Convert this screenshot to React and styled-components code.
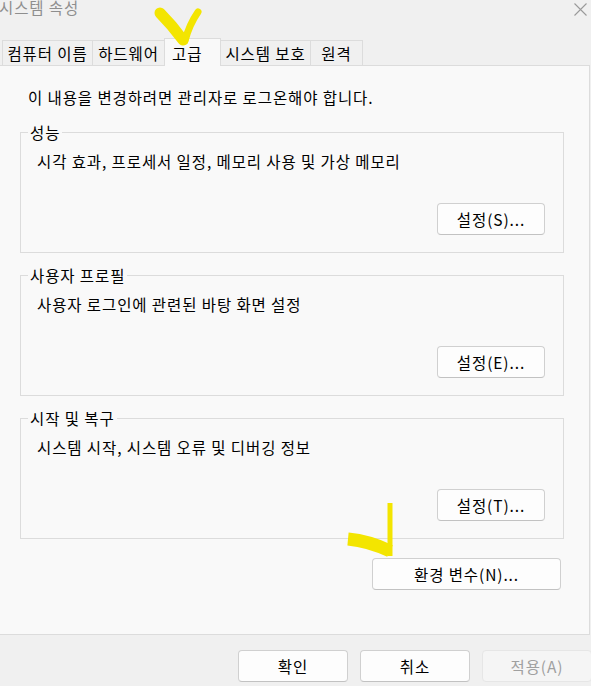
import styled, { createGlobalStyle } from "styled-components";

const GlobalStyle = createGlobalStyle`
  html, body {
    margin: 0;
    padding: 0;
    background: #f0f0f0;
  }
  * {
    box-sizing: border-box;
  }
`;

const Window = styled.div`
  position: relative;
  width: 591px;
  height: 686px;
  overflow: hidden;
  background: #f0f0f0;
  font-family: "Noto Sans CJK KR", "Noto Sans", "Liberation Sans", sans-serif;
  font-size: 15.5px;
  letter-spacing: 0.9px;
  color: #000;
`;

const TitleBar = styled.div`
  display: flex;
  justify-content: space-between;
  align-items: flex-start;
  height: 38px;
`;

const Title = styled.div`
  margin: -1px 0 0 -1px;
  line-height: 16px;
  color: #8e8e8e;
`;

const CloseButton = styled.div`
  display: flex;
  margin: 3px 4px 0 0;
`;

const TabStrip = styled.div`
  display: flex;
  align-items: flex-end;
  height: 28px;
  padding-left: 2px;
  margin-bottom: -1px;
  position: relative;
  z-index: 1;
`;

const Tab = styled.div`
  display: flex;
  align-items: center;
  justify-content: ${(p) => (p.$active ? "flex-start" : "center")};
  width: ${(p) => p.$w}px;
  height: ${(p) => (p.$active ? 28 : 26)}px;
  margin-left: -1px;
  padding: ${(p) => (p.$active ? "1px 0 0 7px" : "0")};
  border: 1px solid #dcdcdc;
  border-bottom: ${(p) => (p.$active ? "none" : "1px solid #dcdcdc")};
  background: ${(p) => (p.$active ? "#f9f9f9" : "#f0f0f0")};
  line-height: 20px;
  white-space: nowrap;
  &:first-child {
    margin-left: 0;
  }
`;

const Panel = styled.div`
  width: 591px;
  height: 570px;
  margin-left: -1px;
  border: 1px solid #dcdcdc;
  background: #f9f9f9;
  padding: 21px 25px 0 20px;
`;

const Notice = styled.div`
  margin-left: 8px;
  line-height: 20px;
  margin-bottom: 15px;
`;

const Groups = styled.div`
  display: flex;
  flex-direction: column;
  gap: 12px;
`;

const Group = styled.fieldset`
  margin: 0;
  padding: 0;
  min-width: 0;
  border: 1px solid #dcdcdc;
`;

const Legend = styled.legend`
  margin-left: 7px;
  padding: 0 2px;
  line-height: 20px;
`;

const Description = styled.div`
  padding: 9px 0 0 16px;
  line-height: 20px;
  height: 61px;
`;

const ButtonRow = styled.div`
  display: flex;
  justify-content: flex-end;
  padding: 0 ${(p) => p.$right ?? 18}px ${(p) => p.$bottom ?? 17}px 0;
  margin-top: ${(p) => p.$top ?? 0}px;
`;

const Button = styled.button`
  display: flex;
  align-items: center;
  justify-content: center;
  width: ${(p) => p.$w ?? 108}px;
  height: 32px;
  padding: 0;
  border: 1px solid #d0d0d0;
  border-bottom-color: #c2c2c2;
  border-radius: 4px;
  background: #fdfdfd;
  font-family: inherit;
  font-size: inherit;
  letter-spacing: inherit;
  color: #000;
  &:disabled {
    background: #f5f5f5;
    border-color: #e6e6e6;
    color: #a0a0a0;
  }
`;

const Footer = styled.div`
  display: flex;
  justify-content: flex-end;
  gap: 12px;
  padding-top: 15px;
  margin-right: -1px;
`;

const Marks = styled.svg`
  position: absolute;
  inset: 0;
  pointer-events: none;
  z-index: 5;
`;

const tabs = [
  { label: "컴퓨터 이름", w: 91 },
  { label: "하드웨어", w: 73 },
  { label: "고급", w: 57, active: true },
  { label: "시스템 보호", w: 91 },
  { label: "원격", w: 53 },
];

const groups = [
  { title: "성능", text: "시각 효과, 프로세서 일정, 메모리 사용 및 가상 메모리", btn: "설정(S)..." },
  { title: "사용자 프로필", text: "사용자 로그인에 관련된 바탕 화면 설정", btn: "설정(E)..." },
  { title: "시작 및 복구", text: "시스템 시작, 시스템 오류 및 디버깅 정보", btn: "설정(T)..." },
];

export default function App() {
  return (
    <Window>
      <GlobalStyle />
      <TitleBar>
        <Title>시스템 속성</Title>
        <CloseButton>
          <svg width="13" height="13" viewBox="0 0 13 13">
            <path d="M0.5 0.5 L12.5 12.5 M12.5 0.5 L0.5 12.5" stroke="#9a9a9a" strokeWidth="1.1" />
          </svg>
        </CloseButton>
      </TitleBar>
      <TabStrip>
        {tabs.map((t) => (
          <Tab key={t.label} $w={t.w} $active={t.active}>
            {t.label}
          </Tab>
        ))}
      </TabStrip>
      <Panel>
        <Notice>이 내용을 변경하려면 관리자로 로그온해야 합니다.</Notice>
        <Groups>
          {groups.map((g) => (
            <Group key={g.title}>
              <Legend>{g.title}</Legend>
              <Description>{g.text}</Description>
              <ButtonRow>
                <Button>{g.btn}</Button>
              </ButtonRow>
            </Group>
          ))}
        </Groups>
        <ButtonRow $top={19} $right={3} $bottom={0}>
          <Button $w={189}>환경 변수(N)...</Button>
        </ButtonRow>
      </Panel>
      <Footer>
        <Button $w={110}>확인</Button>
        <Button $w={110}>취소</Button>
        <Button $w={110} disabled>
          적용(A)
        </Button>
      </Footer>
      <Marks width="591" height="686" viewBox="0 0 591 686">
        <g fill="none" stroke="#f3e500" strokeLinecap="round">
          <path d="M160 13 Q172 25 183 40" strokeWidth="11" />
          <path d="M198 12 Q189 25 185 41" strokeWidth="7" />
          <path d="M390 503 L390 556" strokeWidth="5" strokeLinecap="butt" />
          <path d="M348 539 Q369 541 390 551" strokeWidth="13" strokeLinecap="butt" />
        </g>
      </Marks>
    </Window>
  );
}
